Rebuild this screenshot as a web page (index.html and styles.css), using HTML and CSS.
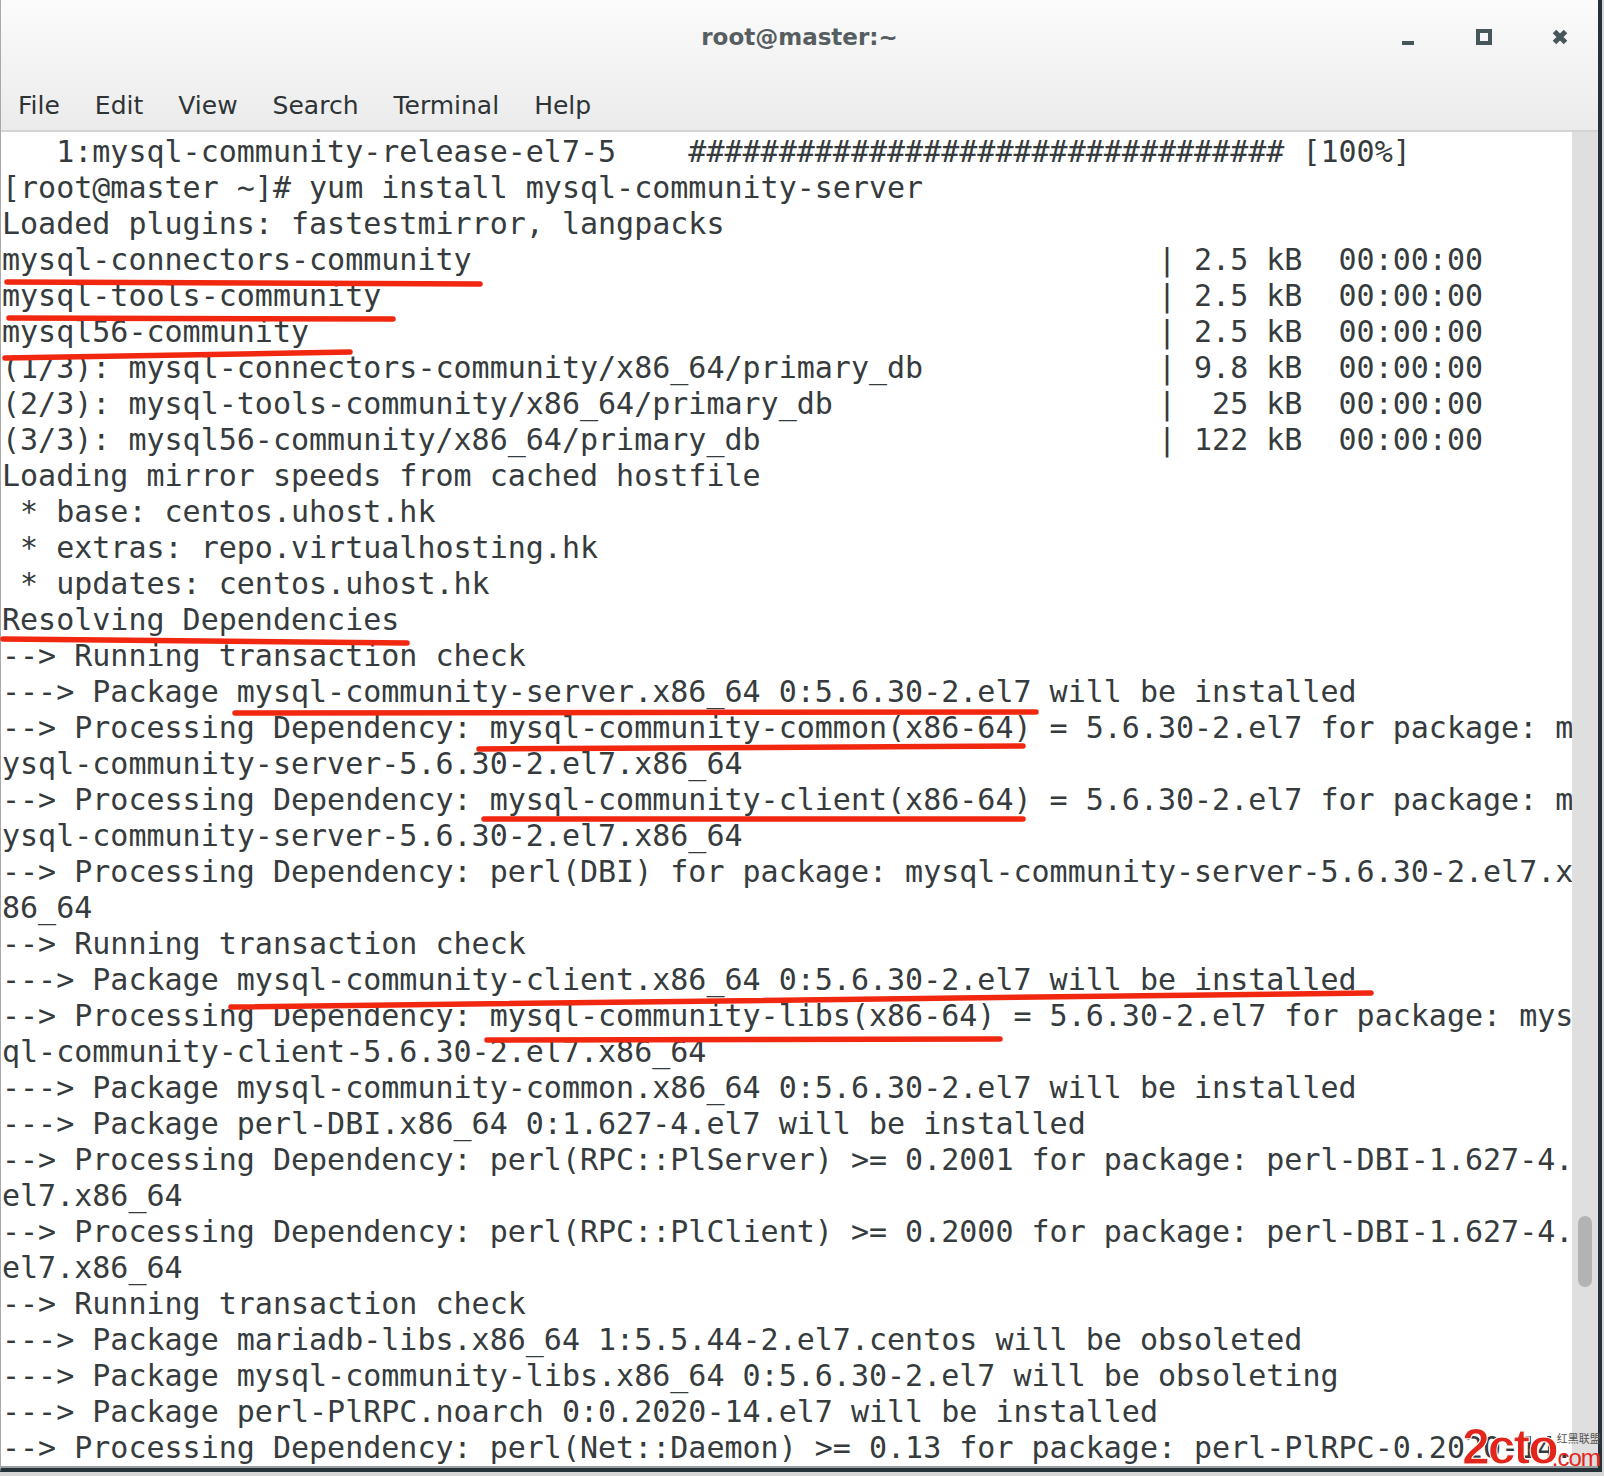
FILE: index.html
```html
<!DOCTYPE html>
<html lang="en">
<head>
<meta charset="utf-8">
<title>root@master:~</title>
<link rel="stylesheet" href="styles.css">
</head>
<body>
<div class="window">
  <header class="chrome">
    <div class="titlebar">
      <h1 class="title">root@master:~</h1>
      <div class="controls">
        <span class="ctl ctl-min"></span>
        <span class="ctl ctl-max"></span>
        <svg class="ctl ctl-close" viewBox="0 0 16 16"><path d="M2.5 2.5 13.5 13.5M13.5 2.5 2.5 13.5"/></svg>
      </div>
    </div>
    <nav class="menubar">
      <span>File</span><span>Edit</span><span>View</span><span>Search</span><span>Terminal</span><span>Help</span>
    </nav>
  </header>
  <div class="main">
<pre class="term">   1:mysql-community-release-el7-5    ################################# [100%]
[root@master ~]# yum install mysql-community-server
Loaded plugins: fastestmirror, langpacks
<span class="col-name">mysql-connectors-community</span>| 2.5 kB  00:00:00
<span class="col-name">mysql-tools-community</span>| 2.5 kB  00:00:00
<span class="col-name">mysql56-community</span>| 2.5 kB  00:00:00
<span class="col-name">(1/3): mysql-connectors-community/x86_64/primary_db</span>| 9.8 kB  00:00:00
<span class="col-name">(2/3): mysql-tools-community/x86_64/primary_db</span>|  25 kB  00:00:00
<span class="col-name">(3/3): mysql56-community/x86_64/primary_db</span>| 122 kB  00:00:00
Loading mirror speeds from cached hostfile
 * base: centos.uhost.hk
 * extras: repo.virtualhosting.hk
 * updates: centos.uhost.hk
Resolving Dependencies
--&gt; Running transaction check
---&gt; Package mysql-community-server.x86_64 0:5.6.30-2.el7 will be installed
--&gt; Processing Dependency: mysql-community-common(x86-64) = 5.6.30-2.el7 for package: m
ysql-community-server-5.6.30-2.el7.x86_64
--&gt; Processing Dependency: mysql-community-client(x86-64) = 5.6.30-2.el7 for package: m
ysql-community-server-5.6.30-2.el7.x86_64
--&gt; Processing Dependency: perl(DBI) for package: mysql-community-server-5.6.30-2.el7.x
86_64
--&gt; Running transaction check
---&gt; Package mysql-community-client.x86_64 0:5.6.30-2.el7 will be installed
--&gt; Processing Dependency: mysql-community-libs(x86-64) = 5.6.30-2.el7 for package: mys
ql-community-client-5.6.30-2.el7.x86_64
---&gt; Package mysql-community-common.x86_64 0:5.6.30-2.el7 will be installed
---&gt; Package perl-DBI.x86_64 0:1.627-4.el7 will be installed
--&gt; Processing Dependency: perl(RPC::PlServer) &gt;= 0.2001 for package: perl-DBI-1.627-4.
el7.x86_64
--&gt; Processing Dependency: perl(RPC::PlClient) &gt;= 0.2000 for package: perl-DBI-1.627-4.
el7.x86_64
--&gt; Running transaction check
---&gt; Package mariadb-libs.x86_64 1:5.5.44-2.el7.centos will be obsoleted
---&gt; Package mysql-community-libs.x86_64 0:5.6.30-2.el7 will be obsoleting
---&gt; Package perl-PlRPC.noarch 0:0.2020-14.el7 will be installed
--&gt; Processing Dependency: perl(Net::Daemon) &gt;= 0.13 for package: perl-PlRPC-0.2020-14.</pre>
    <div class="scrollbar"><div class="thumb"></div></div>
  </div>
</div>

<svg class="marks" viewBox="0 0 1604 1476">
  <path d="M7 282 L480 284"/>
  <path d="M9 318 L393 319"/>
  <path d="M5 358 L350 352"/>
  <path d="M3 639 L407 643"/>
  <path d="M235 713 L1036 712"/>
  <path d="M479 749 L1023 746"/>
  <path d="M484 819 L1023 819"/>
  <path d="M231 1007 L1371 993"/>
  <path d="M487 1040 L1000 1039"/>
</svg>

<div class="watermark">
  <span class="wm-main">2cto</span>
  <span class="wm-side"><span class="wm-cn">红黑联盟</span><span class="wm-com">.com</span></span>
</div>
</body>
</html>
```

FILE: styles.css
```css
* {
  box-sizing: border-box;
}

html,
body {
  margin: 0;
}

body {
  position: relative;
  width: 1604px;
  height: 1476px;
  overflow: hidden;
  background: #d6d6d6;
  font-family: "DejaVu Sans", sans-serif;
}

.window {
  width: 1602px;
  background: #ffffff;
  border-left: 1px solid #a9a9a9;
  border-right: 4px solid #24323a;
  border-bottom: 4px solid #24323a;
}

/* ---------- header ---------- */
.chrome {
  height: 132px;
  background: linear-gradient(#fbfbfb, #ebebeb);
  border-bottom: 2px solid #d4d4d4;
}

.titlebar {
  height: 72px;
  padding-top: 2px;
  display: grid;
  grid-template-columns: 1fr auto 1fr;
  align-items: center;
}

.title {
  grid-column: 2;
  margin: 0;
  font: bold 23px "DejaVu Sans", sans-serif;
  color: #565e61;
}

.controls {
  grid-column: 3;
  justify-self: end;
  display: flex;
  align-items: center;
  gap: 60px;
  padding-right: 30px;
}

.ctl {
  display: block;
  width: 16px;
  height: 16px;
}

.ctl-min {
  width: 12px;
  margin: 0 2px;
  border-bottom: 4px solid #47565b;
}

.ctl-max {
  border: 4px solid #47565b;
}

.ctl-close path {
  stroke: #47565b;
  stroke-width: 5;
  fill: none;
}

.menubar {
  display: flex;
  gap: 35px;
  height: 58px;
  padding: 8px 0 0 17px;
  line-height: 52px;
  font-size: 25px;
  color: #2e3436;
}

/* ---------- terminal ---------- */
.main {
  display: flex;
  height: 1336px;
  border-bottom: 2px solid #9e9e9e;
}

.term {
  flex: 1;
  margin: 0;
  padding: 2px 0 0 1px;
  overflow: hidden;
  white-space: pre;
  font: 30px/36px "DejaVu Sans Mono", monospace;
  color: #363b3d;
}

.col-name {
  display: inline-block;
  width: 64ch;
}

.scrollbar {
  width: 26px;
  background: #dfdfdf;
}

.thumb {
  width: 14px;
  height: 71px;
  margin: 1084px 0 0 6px;
  border-radius: 7px;
  background: #b3b3b3;
}

/* ---------- annotations ---------- */
.marks {
  position: absolute;
  left: 0;
  top: 0;
  width: 1604px;
  height: 1476px;
  pointer-events: none;
}

.marks path {
  fill: none;
  stroke: #f2270f;
  stroke-width: 5.5;
  stroke-linecap: round;
}

.watermark {
  position: absolute;
  left: 1462px;
  top: 1424px;
  display: flex;
  align-items: flex-end;
}

.wm-main {
  font: bold 50px/46px "Liberation Sans", sans-serif;
  letter-spacing: -2px;
  color: #e3261b;
  -webkit-text-stroke: 1px #ffffff;
}

.wm-side {
  display: flex;
  flex-direction: column;
  align-items: flex-start;
  margin-left: -5px;
}

.wm-cn {
  font: 11px/13px "Noto Sans CJK SC", sans-serif;
  color: #555555;
  margin-left: 5px;
}

.wm-com {
  font: 24px/25px "Liberation Sans", sans-serif;
  letter-spacing: -1px;
  color: #e3261b;
}
```
